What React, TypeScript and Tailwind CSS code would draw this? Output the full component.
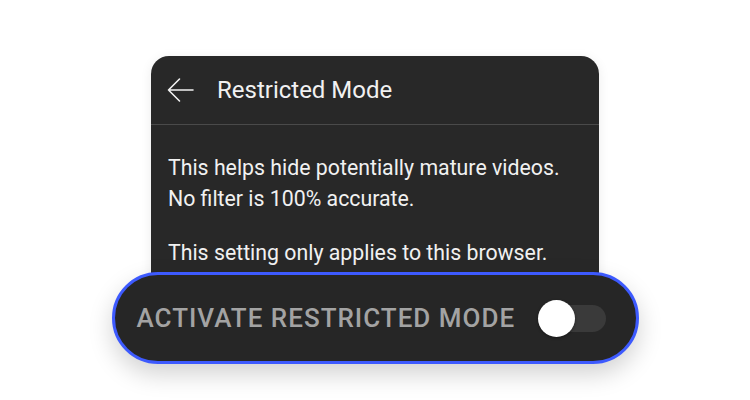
import { useState } from 'react';

function BackArrow() {
  return (
    <svg width="28" height="26" viewBox="0 0 28 26" fill="none" className="shrink-0">
      <path d="M27 13H2.5M13.5 2L2.5 13L13.5 24" stroke="#f1f1f1" strokeWidth="1.6" strokeLinecap="round" strokeLinejoin="round" />
    </svg>
  );
}

export default function App() {
  const [enabled, setEnabled] = useState(false);

  return (
    <div
      className="w-[750px] h-[400px] bg-white flex flex-col items-center pt-[56px] overflow-hidden"
      style={{ fontFamily: 'Roboto, "Liberation Sans", sans-serif' }}
    >
      {/* settings card */}
      <div className="w-[448px] bg-[#282828] rounded-[18px] pb-[37px] shadow-[0_2px_12px_rgba(0,0,0,0.08)]">
        <div className="h-[69px] flex items-center pl-[15px] gap-[23px] border-b border-[#4a4a4a]">
          <BackArrow />
          <span className="text-[24px] text-[#f1f1f1] leading-none">Restricted Mode</span>
        </div>
        <div className="pt-[27px] px-[17px] text-[21.3px] leading-[31px] text-[#f1f1f1]">
          <p>This helps hide potentially mature videos.</p>
          <p>No filter is 100% accurate.</p>
          <p className="mt-[23px]">This setting only applies to this browser.</p>
        </div>
      </div>

      {/* highlighted toggle row */}
      <div className="relative -mt-[33px] w-[527px] h-[92px] rounded-full border-[3px] border-[#3d5afe] bg-[#262626] flex items-center pl-[22px] pr-[30px] shadow-[0_10px_24px_rgba(0,0,0,0.18)]">
        <span className="text-[26px] font-medium tracking-[1px] text-[#a3a3a3] leading-none">
          ACTIVATE RESTRICTED MODE
        </span>
        <button
          onClick={() => setEnabled(!enabled)}
          className="ml-auto relative w-[68px] h-[37px] flex items-center"
        >
          <span className="absolute right-0 w-[60px] h-[27px] rounded-full bg-[#3a3a3a]" />
          <span
            className={
              enabled
                ? 'absolute right-0 w-[37px] h-[37px] rounded-full bg-white shadow-[0_1px_3px_rgba(0,0,0,0.4)]'
                : 'absolute left-0 w-[37px] h-[37px] rounded-full bg-white shadow-[0_1px_3px_rgba(0,0,0,0.4)]'
            }
          />
        </button>
      </div>
    </div>
  );
}
